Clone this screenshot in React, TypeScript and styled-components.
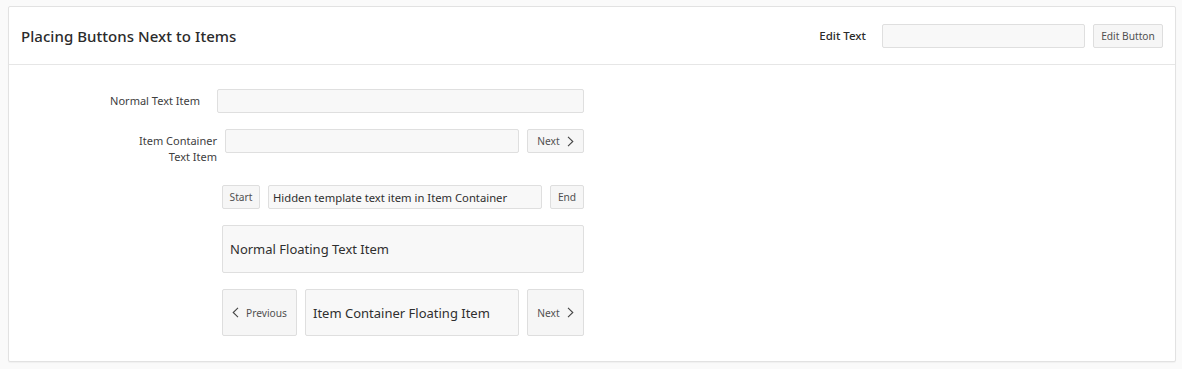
import React from "react";
import styled, { createGlobalStyle } from "styled-components";

const Global = createGlobalStyle`
  html, body { margin: 0; padding: 0; background: #fafafa; }
  body { font-family: "Noto Sans", "Open Sans", sans-serif; color: #333; }
  * { box-sizing: border-box; }
`;

const Page = styled.div`
  padding: 6px 6px 7px 8px;
`;

const Panel = styled.section`
  background: #fff;
  border: 1px solid #e2e2e2;
  border-radius: 2px;
  box-shadow: 0 1px 1px rgba(0,0,0,0.04);
`;

const Header = styled.header`
  height: 58px;
  display: flex;
  align-items: center;
  padding: 0 12px 0 12px;
  border-bottom: 1px solid #e6e6e6;
`;

const Title = styled.h2`
  margin: 0;
  flex: 1;
  font-size: 15px;
  font-weight: 500;
  color: #2b2b2b;
  letter-spacing: 0.05px;
`;

const HeaderLabel = styled.label`
  font-size: 11.5px;
  font-weight: 500;
  color: #2b2b2b;
  margin-right: 16px;
`;

const Body = styled.div`
  padding: 24px 0 25px 0;
  display: flex;
  flex-direction: column;
`;

const Row = styled.div<{ $indent: number; $top: number; $align?: string }>`
  display: flex;
  align-items: ${(p) => p.$align || "center"};
  gap: 8px;
  margin-left: ${(p) => p.$indent}px;
  margin-top: ${(p) => p.$top}px;
`;

const Label = styled.label<{ $width: number; $gap?: number }>`
  width: ${(p) => p.$width}px;
  text-align: right;
  font-size: 11px;
  line-height: 16px;
  color: #404040;
  margin-right: ${(p) => p.$gap || 0}px;
`;

const Input = styled.div<{ $w: number; $h?: number; $size?: number; $pad?: number }>`
  width: ${(p) => p.$w}px;
  height: ${(p) => p.$h || 24}px;
  background: #f8f8f8;
  border: 1px solid #dfdfdf;
  border-radius: 2px;
  display: flex;
  align-items: center;
  padding: 0 ${(p) => p.$pad ?? 7}px;
  font-size: ${(p) => p.$size || 12}px;
  color: #2f2f2f;
  white-space: nowrap;
`;

const Button = styled.button<{ $w: number; $h?: number }>`
  width: ${(p) => p.$w}px;
  height: ${(p) => p.$h || 24}px;
  background: #f6f6f6;
  border: 1px solid #dedede;
  border-radius: 2px;
  font-family: inherit;
  font-size: 10.2px;
  color: #505050;
  display: flex;
  align-items: center;
  justify-content: center;
  gap: 7px;
  padding: 0;
`;

const Chev = ({ dir }: { dir: "l" | "r" }) => (
  <svg width="7" height="11" viewBox="0 0 7 11" fill="none" stroke="#444" strokeWidth="1.1">
    {dir === "r" ? <path d="M1 0.8 L5.8 5.5 L1 10.2" /> : <path d="M6 0.8 L1.2 5.5 L6 10.2" />}
  </svg>
);

export default function App() {
  return (
    <>
      <Global />
      <Page>
        <Panel>
          <Header>
            <Title>Placing Buttons Next to Items</Title>
            <HeaderLabel>Edit Text</HeaderLabel>
            <Input $w={203} />
            <Button $w={70} style={{ marginLeft: 8 }}>Edit Button</Button>
          </Header>
          <Body>
            <Row $indent={0} $top={0}>
              <Label $width={191} $gap={9}>Normal Text Item</Label>
              <Input $w={367} />
            </Row>
            <Row $indent={0} $top={16} $align="flex-start">
              <Label $width={208} style={{ paddingTop: 4 }}>Item Container<br />Text Item</Label>
              <Input $w={294} />
              <Button $w={57}>Next <Chev dir="r" /></Button>
            </Row>
            <Row $indent={213} $top={20}>
              <Button $w={38}>Start</Button>
              <Input $w={274} $size={11.25} $pad={4}>Hidden template text item in Item Container</Input>
              <Button $w={34}>End</Button>
            </Row>
            <Row $indent={213} $top={16}>
              <Input $w={362} $h={48} $size={13}>Normal Floating Text Item</Input>
            </Row>
            <Row $indent={213} $top={16}>
              <Button $w={75} $h={47}><Chev dir="l" /> Previous</Button>
              <Input $w={214} $h={47} $size={13}>Item Container Floating Item</Input>
              <Button $w={57} $h={47}>Next <Chev dir="r" /></Button>
            </Row>
          </Body>
        </Panel>
      </Page>
    </>
  );
}
